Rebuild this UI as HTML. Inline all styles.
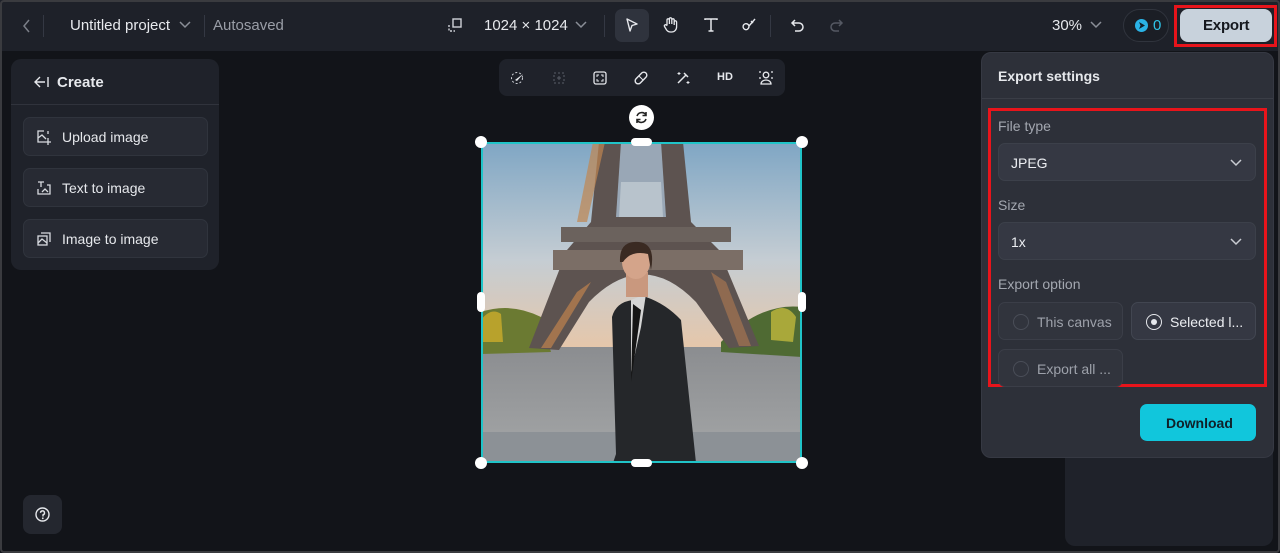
<!DOCTYPE html>
<html><head><meta charset="utf-8"><style>
*{box-sizing:border-box;margin:0;padding:0}
body{width:1280px;height:553px;overflow:hidden;background:#121419;font-family:"Liberation Sans",sans-serif;color:#e6e8ec;position:relative}
.frame{position:absolute;inset:0;border:2px solid #3a3b3f;border-radius:4px;pointer-events:none;z-index:50}
.top{position:absolute;left:0;top:0;width:1280px;height:51px;background:#1e2129}
.t{position:absolute;font-size:14px;white-space:nowrap}
.sep{position:absolute;width:1px;height:22px;top:15px;background:#343843}
.ic{position:absolute}
.panel{position:absolute;left:11px;top:59px;width:208px;height:211px;background:#1f222a;border-radius:10px}
.btn{position:absolute;left:12px;width:185px;height:39px;background:#272a33;border:1px solid #30343d;border-radius:7px}
.btn span{position:absolute;left:38px;top:11px;font-size:14px;color:#e6e8ec}
.tb{position:absolute;left:499px;top:59px;width:286px;height:37px;background:#1f222a;border-radius:8px}
.exp{position:absolute;left:981px;top:52px;width:293px;height:406px;background:#2d3039;border-radius:10px;border:1px solid #363943}
.sel{position:absolute;left:16px;width:258px;height:38px;background:#353843;border:1px solid #3c404a;border-radius:7px}
.opt{position:absolute;width:125px;height:38px;background:#31343d;border:1px solid #3b3e48;border-radius:7px}
.rad{position:absolute;left:14px;top:11px;width:16px;height:16px;border:1.5px solid #4a4e58;border-radius:50%}
.lab{position:absolute;left:16px;font-size:14px;color:#a3a7b0}
</style></head><body>
<div class="top">
<svg class="ic" style="left:20px;top:18px" width="14" height="16"><path d="M9 2 L4 8 L9 14" stroke="#7b7f88" stroke-width="1.5" fill="none"/></svg>
<div class="sep" style="left:43px"></div>
<div class="t" style="left:70px;top:17px;font-size:15px;color:#e8eaee">Untitled project</div>
<svg class="ic" style="left:178px;top:20px" width="14" height="10"><path d="M2 2 L7 7 L12 2" stroke="#8a8e97" stroke-width="1.5" fill="none"/></svg>
<div class="sep" style="left:204px"></div>
<div class="t" style="left:213px;top:17px;color:#9a9ea7;font-size:15px">Autosaved</div>
<svg class="ic" style="left:447px;top:17px" width="16" height="16"><rect x="6" y="2" width="8" height="8" stroke="#cfd2d8" stroke-width="1.4" fill="none"/><path d="M2 8 v6 h6" stroke="#cfd2d8" stroke-width="1.4" fill="none" stroke-dasharray="2 1.5"/></svg>
<div class="t" style="left:484px;top:17px;font-size:15px">1024 × 1024</div>
<svg class="ic" style="left:574px;top:20px" width="14" height="10"><path d="M2 2 L7 7 L12 2" stroke="#8a8e97" stroke-width="1.5" fill="none"/></svg>
<div class="sep" style="left:604px"></div>
<div style="position:absolute;left:615px;top:9px;width:34px;height:33px;background:#2f333d;border-radius:7px"></div>
<svg class="ic" style="left:624px;top:17px" width="16" height="16"><path d="M3 2 L13 7 L8 8.5 L6 14 Z" stroke="#e6e8ec" stroke-width="1.4" fill="none" stroke-linejoin="round"/></svg>
<svg class="ic" style="left:662px;top:16px" width="18" height="18"><path d="M5 9 V4 a1.2 1.2 0 0 1 2.4 0 V8 V3 a1.2 1.2 0 0 1 2.4 0 V8 V4 a1.2 1.2 0 0 1 2.4 0 V9 V6 a1.2 1.2 0 0 1 2.4 0 V11 a5 5 0 0 1 -5 5 h-1 a5 5 0 0 1 -4 -2 L2.5 10.5 a1.2 1.2 0 0 1 2 -1.3 Z" stroke="#e6e8ec" stroke-width="1.3" fill="none"/></svg>
<svg class="ic" style="left:703px;top:17px" width="16" height="16"><path d="M2 3 V2 H14 V3 M8 2 V14 M5.5 14 H10.5" stroke="#e6e8ec" stroke-width="1.5" fill="none"/></svg>
<svg class="ic" style="left:741px;top:17px" width="16" height="16"><path d="M14 2 L8 9 M8 9 a3 3 0 1 0 -2 3.5 c1 -0.5 2 -1.5 2 -3.5Z" stroke="#e6e8ec" stroke-width="1.4" fill="none"/><path d="M10 4 L12 6" stroke="#e6e8ec" stroke-width="1.4"/></svg>
<div class="sep" style="left:770px"></div>
<svg class="ic" style="left:790px;top:17px" width="16" height="16"><path d="M5 3 L2 6 L5 9 M2 6 H9 a4 4 0 0 1 0 8 H5" stroke="#e6e8ec" stroke-width="1.5" fill="none"/></svg>
<svg class="ic" style="left:828px;top:17px" width="16" height="16"><path d="M11 3 L14 6 L11 9 M14 6 H7 a4 4 0 0 0 0 8 H11" stroke="#555963" stroke-width="1.5" fill="none"/></svg>
<div class="t" style="left:1052px;top:17px;font-size:15px">30%</div>
<svg class="ic" style="left:1089px;top:20px" width="14" height="10"><path d="M2 2 L7 7 L12 2" stroke="#8a8e97" stroke-width="1.5" fill="none"/></svg>
<div style="position:absolute;left:1123px;top:9px;width:46px;height:33px;border:1px solid #30343d;border-radius:17px;background:#1b1e25"></div>
<div style="position:absolute;left:1135px;top:19px;width:13px;height:13px;border-radius:50%;background:#2ab3e6"></div>
<svg class="ic" style="left:1137px;top:21px" width="9" height="9"><path d="M2 1 L8 4.5 L2 8 L3.5 4.5Z" fill="#12202a"/></svg>
<div class="t" style="left:1153px;top:17px;color:#2ec4e8;font-size:15px">0</div>
<div style="position:absolute;left:1174px;top:5px;width:103px;height:42px;border:3px solid #e8141b"></div>
<div style="position:absolute;left:1180px;top:9px;width:92px;height:33px;background:#c8d2dc;border-radius:8px"></div>
<div class="t" style="left:1203px;top:17px;color:#15181e;font-size:15px;font-weight:bold;letter-spacing:-0.2px">Export</div>
</div>

<div class="panel">
<div style="position:absolute;left:0;top:45px;width:208px;height:1px;background:#30333c"></div>
<svg class="ic" style="left:22px;top:16px" width="16" height="14"><path d="M7 2 L2 7 L7 12 M2 7 H12 M15 2 V12" stroke="#e6e8ec" stroke-width="1.4" fill="none"/></svg>
<div class="t" style="left:46px;top:15px;font-size:15px;font-weight:bold">Create</div>
<div class="btn" style="top:58px"><svg class="ic" style="left:12px;top:11px" width="16" height="16"><path d="M8 2 H2 V13 H9 M2 9 L6 6 L10 10 M12 2 V5 M12 9 V16 M9 13 H15" stroke="#d8dbe0" stroke-width="1.3" fill="none"/></svg><span>Upload image</span></div>
<div class="btn" style="top:109px"><svg class="ic" style="left:12px;top:11px" width="16" height="16"><path d="M2 2 H8 M5 2 V7 M2 9 V14 H14 V5 H11 M6 12 L9 9 L12 12" stroke="#d8dbe0" stroke-width="1.3" fill="none"/></svg><span>Text to image</span></div>
<div class="btn" style="top:160px"><svg class="ic" style="left:12px;top:11px" width="16" height="16"><rect x="2" y="5" width="9" height="9" stroke="#d8dbe0" stroke-width="1.3" fill="none"/><path d="M5 2 H14 V11 M2 12 L6 8 L11 12" stroke="#d8dbe0" stroke-width="1.3" fill="none"/></svg><span>Image to image</span></div>
</div>

<div style="position:absolute;left:23px;top:495px;width:39px;height:39px;background:#24272f;border-radius:8px"></div>
<svg class="ic" style="left:34px;top:506px" width="17" height="17"><circle cx="8.5" cy="8.5" r="6.5" stroke="#e6e8ec" stroke-width="1.4" fill="none"/><path d="M6.5 6.8 a2 2 0 1 1 2.5 2 V10.5" stroke="#e6e8ec" stroke-width="1.4" fill="none"/><circle cx="8.8" cy="12.3" r="0.9" fill="#e6e8ec"/></svg>

<div class="tb">
<svg class="ic" style="left:11px;top:11px" width="16" height="16"><circle cx="7" cy="8" r="5.5" stroke="#cfd2d8" stroke-dasharray="2 2" fill="none"/><path d="M13 4 L7 11 L5 10Z" fill="#e6e8ec"/></svg>
<svg class="ic" style="left:52px;top:11px" width="16" height="16"><rect x="3" y="3" width="10" height="10" stroke="#5a5e68" stroke-dasharray="2 2" fill="none"/><path d="M8 6 V10 M6 8 H10" stroke="#5a5e68"/></svg>
<svg class="ic" style="left:93px;top:11px" width="16" height="16"><rect x="2" y="2" width="12" height="12" rx="2" stroke="#e6e8ec" stroke-width="1.3" fill="none"/><path d="M5 7 V5 H7 M9 5 H11 V7 M11 9 V11 H9 M7 11 H5 V9" stroke="#e6e8ec" fill="none"/></svg>
<svg class="ic" style="left:134px;top:11px" width="16" height="16"><rect x="1" y="5" width="14" height="6" rx="3" transform="rotate(-45 8 8)" stroke="#e6e8ec" stroke-width="1.4" fill="none"/><path d="M6 6 L10 10" stroke="#e6e8ec"/></svg>
<svg class="ic" style="left:176px;top:11px" width="16" height="16"><path d="M3 13 L11 5 M9 3 L13 7" stroke="#e6e8ec" stroke-width="1.5"/><path d="M13 11 v3 M11.5 12.5 h3 M4 2 v3 M2.5 3.5 h3" stroke="#e6e8ec"/></svg>
<div class="t" style="left:218px;top:12px;font-size:11px;font-weight:bold">HD</div>
<svg class="ic" style="left:259px;top:10px" width="16" height="17"><circle cx="8" cy="6" r="2.8" stroke="#e6e8ec" stroke-width="1.3" fill="none"/><path d="M3 15 a5 4 0 0 1 10 0 Z M1 3 h2 M13 3 h2 M1 9 h2 M13 9 h2" stroke="#e6e8ec" stroke-width="1.3" fill="none"/></svg>
</div>

<div style="position:absolute;left:629px;top:105px;width:25px;height:25px;border-radius:50%;background:#fff"></div>
<svg class="ic" style="left:634px;top:110px" width="15" height="15"><path d="M3 6 a5 5 0 0 1 9 -1 M12 9 a5 5 0 0 1 -9 1" stroke="#222" stroke-width="1.6" fill="none"/><path d="M12 2 V5.5 H8.5 M3 13 V9.5 H6.5" stroke="#222" stroke-width="1.6" fill="none"/></svg>

<svg style="position:absolute;left:481px;top:142px" width="321" height="321" viewBox="0 0 321 321">
<defs>
<linearGradient id="sky" x1="0" y1="0" x2="0" y2="1"><stop offset="0" stop-color="#7fa6c4"/><stop offset=".55" stop-color="#c5cdd3"/><stop offset="1" stop-color="#e9c6a6"/></linearGradient>
<linearGradient id="road" x1="0" y1="0" x2="0" y2="1"><stop offset="0" stop-color="#8b8d90"/><stop offset="1" stop-color="#a5a7a8"/></linearGradient>
</defs>
<rect width="321" height="215" fill="url(#sky)"/>
<rect y="205" width="321" height="116" fill="url(#road)"/>
<rect y="290" width="321" height="31" fill="#8c9196"/>
<path d="M0 170 Q30 160 60 175 L70 210 L0 212Z" fill="#6b7a32"/>
<path d="M240 200 Q280 160 321 165 L321 215 L240 210Z" fill="#4f6a33"/>
<path d="M0 178 Q10 165 20 172 L22 200 L0 200Z" fill="#b8a22c"/>
<path d="M290 170 Q305 160 315 175 L312 200 L290 198Z" fill="#a9a83a"/>
<path d="M118 0 L202 0 L210 80 L238 108 L278 204 L248 206 L215 160 Q162 105 108 160 L78 208 L48 206 L86 108 L110 80Z" fill="#5d5350"/>
<path d="M140 0 L180 0 L185 75 L135 75Z" fill="#a9bdd0" opacity=".8"/>
<path d="M140 40 L180 40 L182 75 L138 75Z" fill="#b8c3cc"/>
<path d="M80 85 H250 V100 H80Z" fill="#6b625d"/>
<path d="M72 108 H262 V128 H72Z" fill="#7b6e66"/>
<path d="M112 0 L124 0 L106 80 L96 80Z" fill="#c08650" opacity=".7"/>
<path d="M96 150 L110 140 L70 206 L60 206Z" fill="#c0834d" opacity=".7"/>
<path d="M230 130 L245 140 L270 204 L258 204Z" fill="#b07a50" opacity=".6"/>
<path d="M135 312 L131 175 Q135 160 152 158 L165 155 Q185 162 200 178 L215 321 L132 321Z" fill="#25272a"/>
<path d="M150 158 L165 152 L160 185 L150 230Z" fill="#d5d5d5"/>
<path d="M152 162 L160 168 L150 240Z" fill="#151515"/>
<rect x="145" y="130" width="22" height="25" fill="#c9987e"/>
<ellipse cx="155" cy="120" rx="14" ry="17" fill="#d4a48a"/>
<path d="M139 120 Q138 98 158 100 Q175 102 170 128 L167 112 Q150 108 142 120Z" fill="#3a2a22"/>
</svg>
<div style="position:absolute;left:481px;top:142px;width:321px;height:321px;border:2px solid #20c4c8"></div>
<div style="position:absolute;left:475px;top:136px;width:12px;height:12px;border-radius:50%;background:#fff"></div>
<div style="position:absolute;left:796px;top:136px;width:12px;height:12px;border-radius:50%;background:#fff"></div>
<div style="position:absolute;left:475px;top:457px;width:12px;height:12px;border-radius:50%;background:#fff"></div>
<div style="position:absolute;left:796px;top:457px;width:12px;height:12px;border-radius:50%;background:#fff"></div>
<div style="position:absolute;left:631px;top:138px;width:21px;height:8px;border-radius:4px;background:#fff"></div>
<div style="position:absolute;left:631px;top:459px;width:21px;height:8px;border-radius:4px;background:#fff"></div>
<div style="position:absolute;left:477px;top:292px;width:8px;height:20px;border-radius:4px;background:#fff"></div>
<div style="position:absolute;left:798px;top:292px;width:8px;height:20px;border-radius:4px;background:#fff"></div>

<div style="position:absolute;left:1065px;top:440px;width:208px;height:106px;background:#1f222a;border-radius:0 0 10px 10px"></div>

<div class="exp">
<div class="t" style="left:16px;top:15px;font-size:14px;font-weight:bold">Export settings</div>
<div style="position:absolute;left:0;top:45px;width:291px;height:1px;background:#3a3d46"></div>
<div style="position:absolute;left:6px;top:55px;width:279px;height:279px;border:3px solid #e8141b"></div>
<div class="lab" style="top:65px">File type</div>
<div class="sel" style="top:90px"><div class="t" style="left:12px;top:11px;color:#eceef2">JPEG</div><svg class="ic" style="left:230px;top:14px" width="14" height="10"><path d="M2 2 L7 7 L12 2" stroke="#c9ccd2" stroke-width="1.5" fill="none"/></svg></div>
<div class="lab" style="top:144px">Size</div>
<div class="sel" style="top:169px"><div class="t" style="left:12px;top:11px;color:#eceef2">1x</div><svg class="ic" style="left:230px;top:14px" width="14" height="10"><path d="M2 2 L7 7 L12 2" stroke="#c9ccd2" stroke-width="1.5" fill="none"/></svg></div>
<div class="lab" style="top:223px">Export option</div>
<div class="opt" style="left:16px;top:249px"><div class="rad"></div><div class="t" style="left:38px;top:11px;color:#9da1aa">This canvas</div></div>
<div class="opt" style="left:149px;top:249px;background:#353843;border-color:#424651"><div class="rad" style="border-color:#e6e8ec"></div><div style="position:absolute;left:19px;top:16px;width:6px;height:6px;border-radius:50%;background:#e6e8ec"></div><div class="t" style="left:38px;top:11px;color:#eceef2">Selected l...</div></div>
<div class="opt" style="left:16px;top:296px"><div class="rad"></div><div class="t" style="left:38px;top:11px;color:#9da1aa">Export all ...</div></div>
<div style="position:absolute;left:158px;top:351px;width:116px;height:37px;background:#11c6dc;border-radius:7px"></div>
<div class="t" style="left:184px;top:362px;font-weight:bold;color:#102028">Download</div>
</div>
<div class="frame"></div>
</body></html>
